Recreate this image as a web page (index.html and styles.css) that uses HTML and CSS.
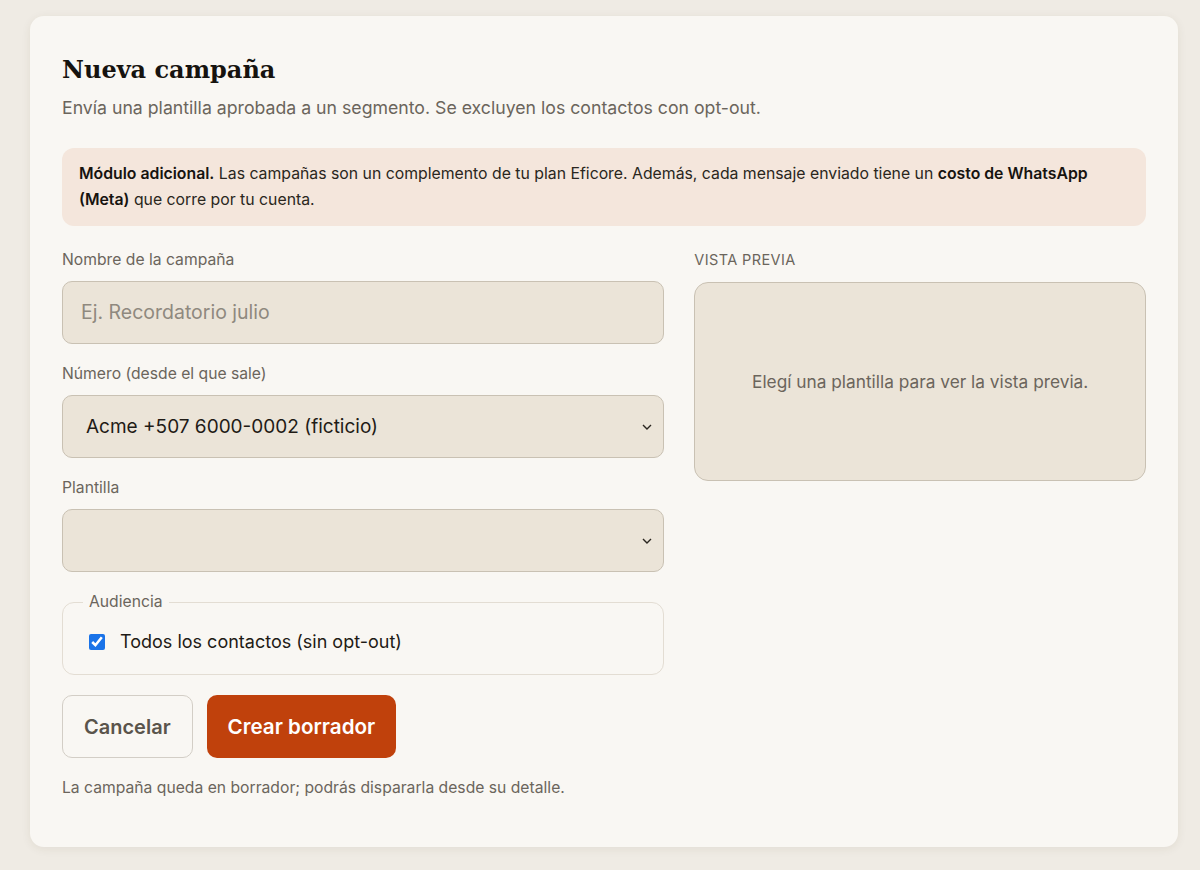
FILE: index.html
```html
<!DOCTYPE html>
<html lang="es">
<head>
    <meta charset="utf-8">
    <title>Nueva campaña</title>
    <link rel="stylesheet" href="styles.css">
</head>
<body>
    <div class="card">
        <h1>Nueva campaña</h1>
        <p class="sub">Envía una plantilla aprobada a un segmento. Se excluyen los contactos con opt-out.</p>

        <div class="notice">
            <b>Módulo adicional.</b> Las campañas son un complemento de tu plan Eficore. Además, cada mensaje enviado tiene un <b>costo de WhatsApp (Meta)</b> que corre por tu cuenta.
        </div>

        <div class="grid">
            <form class="form">
                <label class="field">
                    <span class="lbl">Nombre de la campaña</span>
                    <input type="text" placeholder="Ej. Recordatorio julio">
                </label>

                <label class="field">
                    <span class="lbl">Número (desde el que sale)</span>
                    <div class="select">
                        <select>
                            <option>Acme +507 6000-0002 (ficticio)</option>
                        </select>
                        <svg viewBox="0 0 10 6" width="10" height="6"><path d="M1 1l4 4 4-4" fill="none" stroke="#2a2620" stroke-width="1.4"/></svg>
                    </div>
                </label>

                <label class="field">
                    <span class="lbl">Plantilla</span>
                    <div class="select">
                        <select>
                            <option></option>
                        </select>
                        <svg viewBox="0 0 10 6" width="10" height="6"><path d="M1 1l4 4 4-4" fill="none" stroke="#2a2620" stroke-width="1.4"/></svg>
                    </div>
                </label>

                <fieldset class="aud">
                    <legend>Audiencia</legend>
                    <label class="check">
                        <input type="checkbox" checked>
                        Todos los contactos (sin opt-out)
                    </label>
                </fieldset>

                <div class="actions">
                    <button type="button" class="btn ghost">Cancelar</button>
                    <button type="button" class="btn primary">Crear borrador</button>
                </div>

                <p class="note">La campaña queda en borrador; podrás dispararla desde su detalle.</p>
            </form>

            <div class="preview">
                <span class="cap">VISTA PREVIA</span>
                <div class="preview-box">Elegí una plantilla para ver la vista previa.</div>
            </div>
        </div>
    </div>
</body>
</html>
```

FILE: styles.css
```css
body {
    background-color: #efebe4;
    font-family: Inter, "Noto Sans", sans-serif;
    color: #1f1b16;
    margin: 0;
    padding: 16px 22px 23px 30px;
}

.card {
    background-color: #f9f7f3;
    border-radius: 14px;
    box-shadow: 0 2px 10px rgba(80, 60, 30, 0.08);
    padding: 38px 32px 48px 32px;
}

h1 {
    font-family: "DejaVu Serif", "Liberation Serif", serif;
    font-weight: bold;
    font-size: 24px;
    line-height: 32px;
    margin: 0 0 10px 0;
    color: #16130f;
}

.sub {
    margin: 0 0 28px 0;
    font-size: 17.7px;
    line-height: 24px;
    color: #6b655c;
}

.notice {
    background-color: #f4e6dc;
    border-radius: 12px;
    padding: 13px 17px;
    font-size: 15.8px;
    line-height: 26px;
    color: #2a2620;
    margin-bottom: 24px;
}

.notice b {
    font-weight: 600;
    color: #16130f;
}

.grid {
    display: grid;
    grid-template-columns: 4fr 3fr;
    gap: 30px;
}

.form {
    display: flex;
    flex-direction: column;
}

.field {
    display: flex;
    flex-direction: column;
    margin-bottom: 20px;
}

.lbl {
    font-size: 15.7px;
    color: #6b655c;
    margin-bottom: 11px;
    line-height: 20px;
}

.cap {
    display: block;
    font-size: 14.5px;
    line-height: 20px;
    color: #6b655c;
    margin-bottom: 12px;
    letter-spacing: 0.4px;
}

input[type="text"], select {
    font-family: inherit;
    font-size: 19px;
    height: 63px;
    box-sizing: border-box;
    background-color: #ebe4d8;
    border: 1.5px solid #c9c1b3;
    border-radius: 10px;
    padding: 0 18px;
    color: #1f1b16;
    width: 100%;
    outline: none;
}

input::placeholder {
    color: #8f897f;
    font-size: 19.5px;
}

.select {
    position: relative;
}

select {
    appearance: none;
    padding-left: 23px;
}

.select svg {
    position: absolute;
    right: 12px;
    top: 29px;
}

.aud {
    border: 1.5px solid #e3ddd3;
    border-radius: 12px;
    margin: 0 0 20px 0;
    padding: 18px 26px 20px 26px;
}

.aud legend {
    font-size: 15.7px;
    line-height: 20px;
    color: #6b655c;
    padding: 0 6px;
    margin-left: -6px;
}

.check {
    display: flex;
    align-items: center;
    gap: 15px;
    font-size: 18px;
    line-height: 24px;
    color: #1f1b16;
}

.check input {
    width: 16px;
    height: 16px;
    margin: 0;
    accent-color: #1a73e8;
}

.actions {
    display: flex;
    gap: 14px;
}

.btn {
    font-family: inherit;
    font-size: 20px;
    font-weight: 600;
    height: 63px;
    border-radius: 10px;
    padding: 0 21px;
    cursor: pointer;
}

.ghost {
    background-color: transparent;
    border: 1.5px solid #d3cec6;
    color: #5a544b;
}

.primary {
    background-color: #c0410c;
    border: none;
    color: #fff;
    font-size: 20.6px;
}

.note {
    font-size: 15.7px;
    line-height: 22px;
    color: #6b655c;
    margin: 19px 0 0 0;
}

.preview-box {
    height: 199px;
    box-sizing: border-box;
    background-color: #ebe4d8;
    border: 1.5px solid #c9c1b3;
    border-radius: 14px;
    display: flex;
    align-items: center;
    justify-content: center;
    font-size: 17.3px;
    color: #6b655c;
}
```
